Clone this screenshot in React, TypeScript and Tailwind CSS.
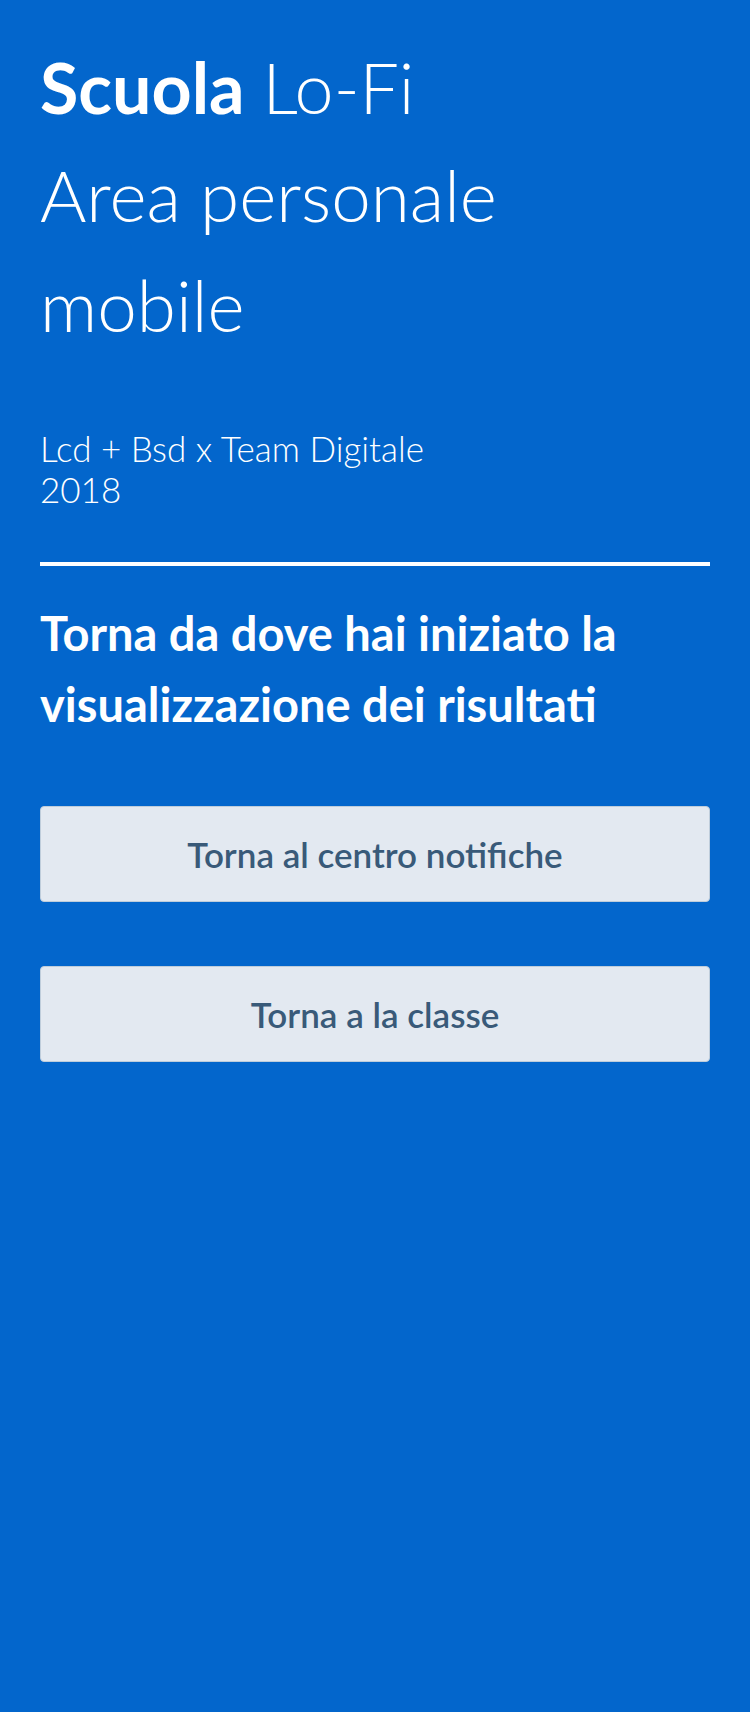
export default function App() {
  return (
    <div className="min-h-[1712px] w-full bg-[#0366cc] px-10 pt-[34px] font-['Lato','Noto_Sans',sans-serif] text-white">
      <h1 className="text-[70px] leading-[106px]">
        <span className="font-bold">Scuola</span>{' '}
        <span className="font-light">Lo-Fi</span>
      </h1>
      <h2 className="text-[71px] font-light leading-[110px]">
        Area personale
        <br />
        mobile
      </h2>

      <p className="mt-[68px] text-[35px] font-light leading-[41px]">
        Lcd + Bsd x Team Digitale
        <br />
        2018
      </p>

      <hr className="mt-[52px] h-1 border-0 bg-white" />

      <h3 className="mt-8 text-[47px] font-bold leading-[71px]">
        Torna da dove hai iniziato la visualizzazione dei risultati
      </h3>

      <div className="mt-[66px] flex flex-col gap-16">
        <button className="h-24 w-full rounded border border-[#bfcddb] bg-[#e3e9f1] text-[35px] font-semibold text-[#395a79]">
          Torna al centro notifiche
        </button>
        <button className="h-24 w-full rounded border border-[#bfcddb] bg-[#e3e9f1] text-[35px] font-semibold text-[#395a79]">
          Torna a la classe
        </button>
      </div>
    </div>
  );
}
